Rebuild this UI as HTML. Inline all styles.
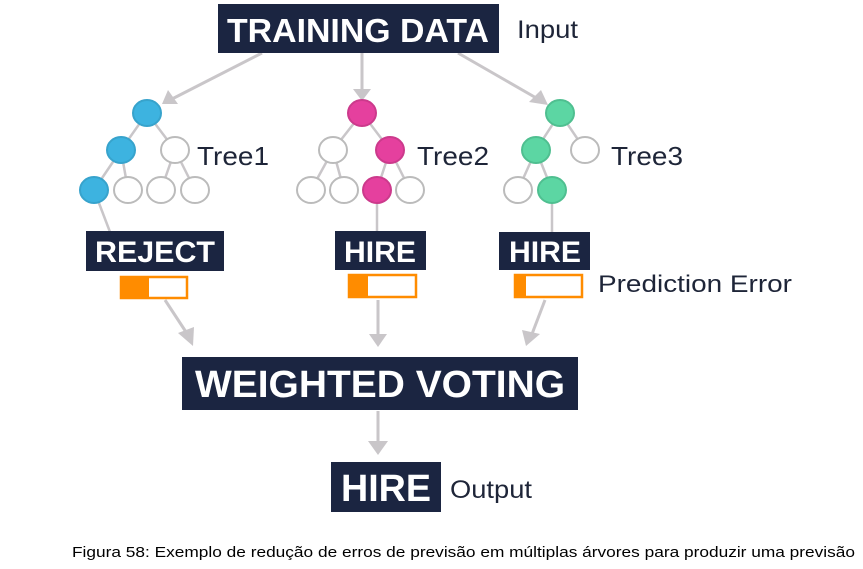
<!DOCTYPE html>
<html><head><meta charset="utf-8"><style>
html,body{margin:0;padding:0;background:#fff;width:863px;height:569px;overflow:hidden}
svg{display:block}
.b{font-family:"Liberation Sans",Arial,sans-serif;font-weight:bold;fill:#fff}
.l{font-family:"Liberation Sans",Arial,sans-serif;fill:#1e2538}
</style></head><body>
<svg width="863" height="569" viewBox="0 0 863 569">
<g stroke="#c9c6c9" stroke-width="3" fill="none">
<line x1="262" y1="53" x2="172" y2="99"/>
<line x1="362" y1="53" x2="362" y2="90"/>
<line x1="458" y1="53" x2="538" y2="99"/>
<line x1="165" y1="300" x2="186" y2="332"/>
<line x1="378" y1="300" x2="378" y2="336"/>
<line x1="545" y1="300" x2="532" y2="334"/>
<line x1="378" y1="411" x2="378" y2="444"/>
</g>
<g fill="#c9c6c9">
<polygon points="162,104 168,90 178,104"/>
<polygon points="353,89 371,89 362,101"/>
<polygon points="548,105 529,102 541,90"/>
<polygon points="193,346 178,333 194,327"/>
<polygon points="369,334 387,334 378,347"/>
<polygon points="526,346 522,330 540,334"/>
<polygon points="368,441 388,441 378,455"/>
</g>
<g stroke="#c9c6c9" stroke-width="2.5" fill="none">
<line x1="147" y1="113" x2="121" y2="150"/><line x1="147" y1="113" x2="175" y2="150"/>
<line x1="121" y1="150" x2="94" y2="190"/><line x1="121" y1="150" x2="128" y2="190"/>
<line x1="175" y1="150" x2="161" y2="190"/><line x1="175" y1="150" x2="195" y2="190"/>
<line x1="94" y1="190" x2="110" y2="232"/>
<line x1="362" y1="113" x2="333" y2="150"/><line x1="362" y1="113" x2="390" y2="150"/>
<line x1="333" y1="150" x2="311" y2="190"/><line x1="333" y1="150" x2="344" y2="190"/>
<line x1="390" y1="150" x2="377" y2="190"/><line x1="390" y1="150" x2="410" y2="190"/>
<line x1="377" y1="190" x2="377" y2="232"/>
<line x1="560" y1="113" x2="536" y2="150"/><line x1="560" y1="113" x2="585" y2="150"/>
<line x1="536" y1="150" x2="518" y2="190"/><line x1="536" y1="150" x2="552" y2="190"/>
<line x1="552" y1="190" x2="552" y2="232"/>
</g>
<g stroke-width="2">
<ellipse cx="147" cy="113" rx="14" ry="13" fill="#3db3e0" stroke="#37a3cc"/>
<ellipse cx="121" cy="150" rx="14" ry="13" fill="#3db3e0" stroke="#37a3cc"/>
<ellipse cx="175" cy="150" rx="14" ry="13" fill="#fff" stroke="#bbb"/>
<ellipse cx="94" cy="190" rx="14" ry="13" fill="#3db3e0" stroke="#37a3cc"/>
<ellipse cx="128" cy="190" rx="14" ry="13" fill="#fff" stroke="#bbb"/>
<ellipse cx="161" cy="190" rx="14" ry="13" fill="#fff" stroke="#bbb"/>
<ellipse cx="195" cy="190" rx="14" ry="13" fill="#fff" stroke="#bbb"/>
<ellipse cx="362" cy="113" rx="14" ry="13" fill="#e5409e" stroke="#cc3a8c"/>
<ellipse cx="333" cy="150" rx="14" ry="13" fill="#fff" stroke="#bbb"/>
<ellipse cx="390" cy="150" rx="14" ry="13" fill="#e5409e" stroke="#cc3a8c"/>
<ellipse cx="311" cy="190" rx="14" ry="13" fill="#fff" stroke="#bbb"/>
<ellipse cx="344" cy="190" rx="14" ry="13" fill="#fff" stroke="#bbb"/>
<ellipse cx="377" cy="190" rx="14" ry="13" fill="#e5409e" stroke="#cc3a8c"/>
<ellipse cx="410" cy="190" rx="14" ry="13" fill="#fff" stroke="#bbb"/>
<ellipse cx="560" cy="113" rx="14" ry="13" fill="#5cd6a3" stroke="#4fbf90"/>
<ellipse cx="536" cy="150" rx="14" ry="13" fill="#5cd6a3" stroke="#4fbf90"/>
<ellipse cx="585" cy="150" rx="14" ry="13" fill="#fff" stroke="#bbb"/>
<ellipse cx="518" cy="190" rx="14" ry="13" fill="#fff" stroke="#bbb"/>
<ellipse cx="552" cy="190" rx="14" ry="13" fill="#5cd6a3" stroke="#4fbf90"/>
</g>
<g fill="#1b2541">
<rect x="218" y="4" width="281" height="49"/>
<rect x="86" y="231" width="138" height="40"/>
<rect x="335" y="231" width="91" height="39"/>
<rect x="499" y="232" width="91" height="38"/>
<rect x="182" y="357" width="396" height="53"/>
<rect x="331" y="462" width="110" height="50"/>
</g>
<text class="b" x="358" y="42" font-size="33" text-anchor="middle" textLength="262" lengthAdjust="spacingAndGlyphs">TRAINING DATA</text>
<text class="b" x="155" y="262" font-size="30" text-anchor="middle" textLength="120" lengthAdjust="spacingAndGlyphs">REJECT</text>
<text class="b" x="380" y="262" font-size="30" text-anchor="middle" textLength="72" lengthAdjust="spacingAndGlyphs">HIRE</text>
<text class="b" x="545" y="262" font-size="30" text-anchor="middle" textLength="72" lengthAdjust="spacingAndGlyphs">HIRE</text>
<text class="b" x="380" y="397" font-size="38" text-anchor="middle" textLength="370" lengthAdjust="spacingAndGlyphs">WEIGHTED VOTING</text>
<text class="b" x="386" y="501" font-size="38" text-anchor="middle" textLength="90" lengthAdjust="spacingAndGlyphs">HIRE</text>
<text class="l" x="517" y="38" font-size="25" textLength="61" lengthAdjust="spacingAndGlyphs">Input</text>
<text class="l" x="197" y="165" font-size="26" textLength="72" lengthAdjust="spacingAndGlyphs">Tree1</text>
<text class="l" x="417" y="165" font-size="26" textLength="72" lengthAdjust="spacingAndGlyphs">Tree2</text>
<text class="l" x="611" y="165" font-size="26" textLength="72" lengthAdjust="spacingAndGlyphs">Tree3</text>
<text class="l" x="598" y="292" font-size="24" textLength="194" lengthAdjust="spacingAndGlyphs">Prediction Error</text>
<text class="l" x="450" y="498" font-size="25" textLength="82" lengthAdjust="spacingAndGlyphs">Output</text>
<g stroke="#ff8c00" stroke-width="2.5">
<rect x="121" y="277" width="66" height="21" fill="#fff"/>
<rect x="349" y="275" width="67" height="22" fill="#fff"/>
<rect x="515" y="275" width="67" height="22" fill="#fff"/>
</g>
<g fill="#ff8c00">
<rect x="120" y="276" width="29" height="23"/>
<rect x="348" y="274" width="20" height="24"/>
<rect x="514" y="274" width="12" height="24"/>
</g>
<text x="72" y="557" font-family="Liberation Sans,Arial,sans-serif" font-size="15" fill="#000" textLength="783" lengthAdjust="spacingAndGlyphs">Figura 58: Exemplo de redução de erros de previsão em múltiplas árvores para produzir uma previsão</text>
</svg>
</body></html>
